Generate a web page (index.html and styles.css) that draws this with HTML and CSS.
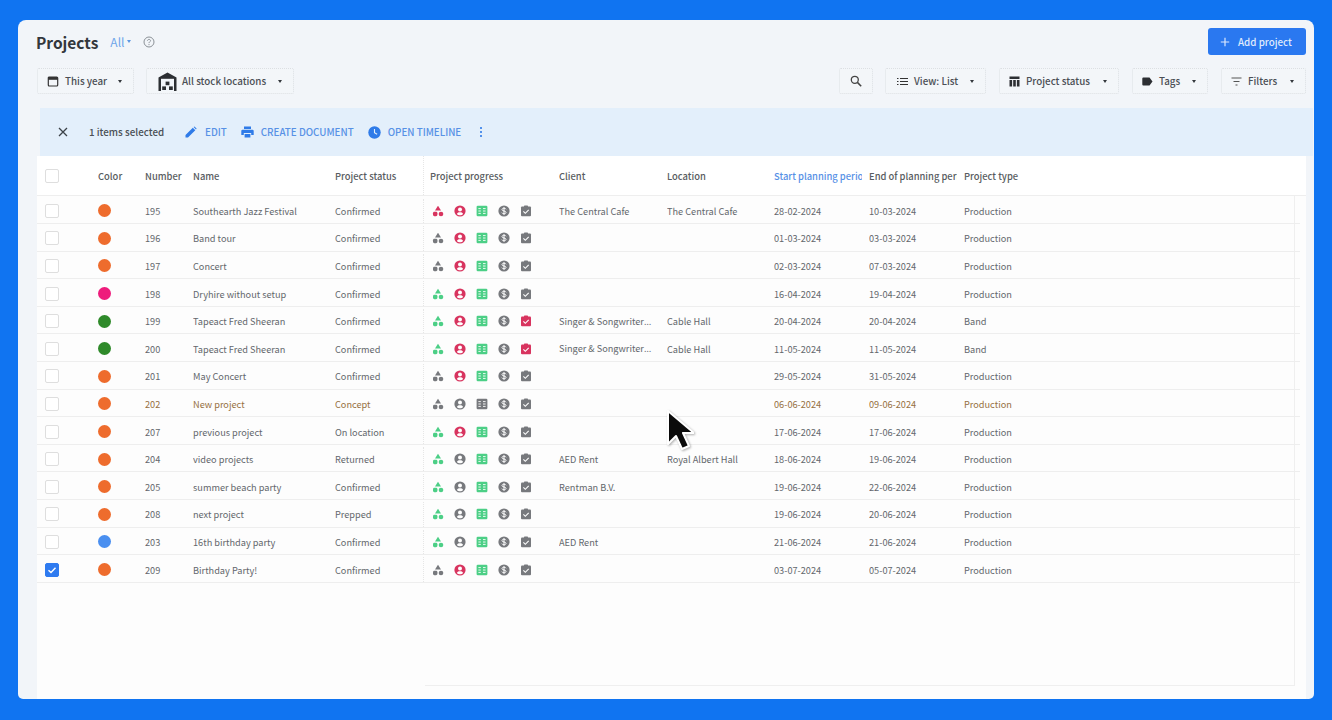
FILE: index.html
```html
<!DOCTYPE html>
<html lang="en">
<head>
<meta charset="utf-8">
<title>Projects</title>
<link rel="stylesheet" href="styles.css">
</head>
<body>
<svg class="defs" width="0" height="0">
  <symbol id="tree" viewBox="0 0 12 12"><path d="M6 .8 9 5.6H3Z"/><rect x="1" y="6.800" width="4.400" height="4.400" rx="1.400"/><circle cx="9" cy="9" r="2.300"/></symbol>
  <symbol id="person" viewBox="0 0 12 12"><circle cx="6" cy="6" r="5.600"/><circle cx="6" cy="4.500" r="2" fill="#fff"/><path d="M2.800 8.900c.6-1.300 1.900-1.700 3.200-1.700s2.600.4 3.200 1.700c-.8.9-2 1.400-3.200 1.400s-2.400-.5-3.200-1.400Z" fill="#fff"/></symbol>
  <symbol id="sheet" viewBox="0 0 12 12"><rect x=".6" y=".8" width="10.800" height="10.400" rx="1.200"/><path d="M2.400 3.600h2.400M7 3.600h2.600M2.400 6h2.400M7 6h2.600M2.400 8.400h2.400M7 8.400h2.600" stroke="#fff" stroke-width=".9" fill="none"/></symbol>
  <symbol id="dollar" viewBox="0 0 12 12"><circle cx="6" cy="6" r="5.600"/><path d="M8 4.300C7.700 3.500 7 3.200 6 3.200c-1.100 0-2 .5-2 1.400C4 6.600 8 5.400 8 7.400c0 .9-.9 1.400-2 1.400-1 0-1.800-.4-2.100-1.200M6 2.200v7.600" stroke="#fff" stroke-width="1" fill="none"/></symbol>
  <symbol id="check" viewBox="0 0 12 12"><rect x="1" y="1.600" width="10" height="9.600" rx="1"/><rect x="4" y=".6" width="4" height="2" rx=".6"/><path d="m3.400 6.400 1.900 1.900 3.400-3.500" stroke="#fff" stroke-width="1.100" fill="none"/></symbol>
</svg>

<main class="card">
  <header class="title-bar">
    <h1 class="title">Projects</h1>
    <span class="all">All</span><span class="caret caret-blue"></span>
    <svg class="help" viewBox="0 0 12 12" width="12" height="12"><circle cx="6" cy="6" r="5" fill="none" stroke="#8a9096" stroke-width="1"/><path d="M4.500 4.800C4.500 3.900 5.200 3.400 6 3.400s1.500.5 1.500 1.300C7.500 5.800 6 5.800 6 7.100" fill="none" stroke="#8a9096" stroke-width="1"/><circle cx="6" cy="8.600" r=".6" fill="#8a9096"/></svg>
    <button class="add-btn"><svg viewBox="0 0 10 10" width="10" height="10"><path d="M5 .8v8.400M.8 5h8.400" stroke="#dbe8fd" stroke-width="1.200"/></svg>Add project</button>
  </header>

  <div class="tool-bar">
    <button class="tool tool-year"><svg viewBox="0 0 12 12" width="12" height="12"><rect x="1.300" y="2" width="9.400" height="9" rx="1" fill="none" stroke="#333" stroke-width="1.200"/><rect x="1.300" y="2" width="9.400" height="2.800" fill="#333"/></svg>This year<span class="caret"></span></button>
    <button class="tool tool-stock"><svg viewBox="0 0 19 19" width="19" height="19"><path d="M.5 5.500 9.500.5l9 5V19h-18Z" fill="#2c2f33"/><rect x="3" y="6.800" width="13" height="12.200" fill="#f2f6fa"/><rect x="7.600" y="9.600" width="3.800" height="3.600" fill="#2c2f33"/><rect x="4.200" y="14.400" width="3.800" height="3.600" fill="#2c2f33"/><rect x="11" y="14.400" width="3.800" height="3.600" fill="#2c2f33"/></svg>All stock locations<span class="caret"></span></button>
    <button class="tool tool-search"><svg viewBox="0 0 12 12" width="12" height="12"><circle cx="4.800" cy="4.800" r="3.500" fill="none" stroke="#444" stroke-width="1.300"/><path d="m7.400 7.400 3.800 3.800" stroke="#444" stroke-width="1.500"/></svg></button>
    <button class="tool tool-view"><svg viewBox="0 0 11 11" width="11" height="11"><path d="M3 2.500h8M3 5.500h8M3 8.500h8M0 2.500h1.500M0 5.500h1.500M0 8.500h1.500" stroke="#333" stroke-width="1.100"/></svg>View: List<span class="caret"></span></button>
    <button class="tool tool-status"><svg viewBox="0 0 11 11" width="11" height="11"><path d="M.5 .5h10v2.400H.5ZM.5 4h2.600v6.500H.5ZM4.200 4h2.600v6.500H4.200ZM7.900 4h2.600v6.500H7.900Z" fill="#2c2f33"/></svg>Project status<span class="caret"></span></button>
    <button class="tool tool-tags"><svg viewBox="0 0 11 9" width="11" height="9"><path d="M1.300 .5h6.200l3 4-3 4H1.300a1 1 0 0 1-1-1v-6a1 1 0 0 1 1-1Z" fill="#2c2f33"/></svg>Tags<span class="caret"></span></button>
    <button class="tool tool-filters"><svg viewBox="0 0 11 9" width="11" height="9"><path d="M.5 1h10M2.500 4.500h6M4.500 8h2" stroke="#555" stroke-width="1.100"/></svg>Filters<span class="caret"></span></button>
  </div>

  <div class="bulk-bar">
    <svg class="bulk-x" viewBox="0 0 10 10" width="10" height="10"><path d="m1 1 8 8M9 1 1 9" stroke="#3c4248" stroke-width="1.300"/></svg>
    <span class="bulk-count">1 items selected</span>
    <span class="bulk-act bulk-edit"><svg viewBox="0 0 12 12" width="12" height="12"><path d="M.5 11.500V9L7.800 1.700l2.500 2.500L3 11.500ZM8.600 1l.8-.6 2.200 2.200-.6.800Z" fill="#2f7be8"/></svg>EDIT</span>
    <span class="bulk-act bulk-doc"><svg viewBox="0 0 13 12" width="13" height="12"><path d="M3 .5h7v2.500H3ZM1.500 3.800h10A1.200 1.200 0 0 1 12.700 5v4H10.200V7H2.800v2H.3V5a1.200 1.200 0 0 1 1.200-1.200ZM3.600 8h5.800v3.500H3.600Z" fill="#2f7be8"/></svg>CREATE DOCUMENT</span>
    <span class="bulk-act bulk-time"><svg viewBox="0 0 13 13" width="13" height="13"><circle cx="6.500" cy="6.500" r="6.200" fill="#2f7be8"/><path d="M6.500 3v3.700l2.600 1.500" stroke="#e3effb" stroke-width="1.100" fill="none"/></svg>OPEN TIMELINE</span>
    <svg class="bulk-more" viewBox="0 0 4 12" width="4" height="12"><circle cx="2" cy="2" r="1.100" fill="#2f7be8"/><circle cx="2" cy="6" r="1.100" fill="#2f7be8"/><circle cx="2" cy="10" r="1.100" fill="#2f7be8"/></svg>
  </div>

  <section class="table">
    <div class="row head">
      <div class="cell c-check"><span class="box"></span></div>
      <div class="cell c-color">Color</div>
      <div class="cell c-num">Number</div>
      <div class="cell c-name">Name</div>
      <div class="cell c-status">Project status</div>
      <div class="cell c-prog">Project progress</div>
      <div class="cell c-client">Client</div>
      <div class="cell c-loc">Location</div>
      <div class="cell c-start sorted">Start planning period</div>
      <div class="cell c-end">End of planning period</div>
      <div class="cell c-type">Project type</div>
    </div>
    <div class="viewport" id="rows"></div>
  </section>

  <svg class="cursor" viewBox="0 0 28 42" width="28" height="42"><path d="M2 2v33l8-8 6 13 7-3-6-13h11Z" fill="#0b0b0b" stroke="#fff" stroke-width="2" stroke-linejoin="round"/></svg>
</main>
<script src="rows.js"></script>
</body>
</html>
```

FILE: rows.js
```js
var O = '#ee6c2d', P = '#ee1c7c', G = '#2f8a2a', B = '#4a8ff0';
var SONG = 'Singer &amp; Songwriter<span class="ell">…</span>';
var rows = [
  ['195', O, 'Southearth Jazz Festival', 'Confirmed', 'rrgyy', 'The Central Cafe', 'The Central Cafe', '28-02-2024', '10-03-2024', 'Production'],
  ['196', O, 'Band tour', 'Confirmed', 'yrgyy', '', '', '01-03-2024', '03-03-2024', 'Production'],
  ['197', O, 'Concert', 'Confirmed', 'yrgyy', '', '', '02-03-2024', '07-03-2024', 'Production'],
  ['198', P, 'Dryhire without setup', 'Confirmed', 'grgyy', '', '', '16-04-2024', '19-04-2024', 'Production'],
  ['199', G, 'Tapeact Fred Sheeran', 'Confirmed', 'grgyr', SONG, 'Cable Hall', '20-04-2024', '20-04-2024', 'Band'],
  ['200', G, 'Tapeact Fred Sheeran', 'Confirmed', 'grgyr', SONG, 'Cable Hall', '11-05-2024', '11-05-2024', 'Band'],
  ['201', O, 'May Concert', 'Confirmed', 'yrgyy', '', '', '29-05-2024', '31-05-2024', 'Production'],
  ['202', O, 'New project', 'Concept', 'yyyyy', '', '', '06-06-2024', '09-06-2024', 'Production', 'concept'],
  ['207', O, 'previous project', 'On location', 'grgyy', '', '', '17-06-2024', '17-06-2024', 'Production'],
  ['204', O, 'video projects', 'Returned', 'gygyy', 'AED Rent', 'Royal Albert Hall', '18-06-2024', '19-06-2024', 'Production'],
  ['205', O, 'summer beach party', 'Confirmed', 'gygyy', 'Rentman B.V.', '', '19-06-2024', '22-06-2024', 'Production'],
  ['208', O, 'next project', 'Prepped', 'gygyy', '', '', '19-06-2024', '20-06-2024', 'Production'],
  ['203', B, '16th birthday party', 'Confirmed', 'gygyy', 'AED Rent', '', '21-06-2024', '21-06-2024', 'Production'],
  ['209', O, 'Birthday Party!', 'Confirmed', 'yrgyy', '', '', '03-07-2024', '05-07-2024', 'Production', 'selected']
];
var icons = ['tree', 'person', 'sheet', 'dollar', 'check'];
var tone = { r: 'i-red', g: 'i-green', y: 'i-grey' };
document.getElementById('rows').innerHTML = rows.map(function (r) {
  var prog = icons.map(function (n, i) {
    return '<svg class="ico ' + tone[r[4][i]] + '"><use href="#' + n + '"/></svg>';
  }).join('');
  var flag = r[10] || '';
  return '<div class="row ' + flag + '">' +
    '<div class="cell c-check"><span class="box">' +
    (flag === 'selected' ? '<svg viewBox="0 0 14 14" width="14" height="14"><path d="m3.500 7.200 2.500 2.400 4.500-4.800" stroke="#fff" stroke-width="1.400" fill="none"/></svg>' : '') +
    '</span></div>' +
    '<div class="cell c-color"><span class="dot" style="background:' + r[1] + '"></span></div>' +
    '<div class="cell c-num">' + r[0] + '</div>' +
    '<div class="cell c-name">' + r[2] + '</div>' +
    '<div class="cell c-status">' + r[3] + '</div>' +
    '<div class="cell c-prog">' + prog + '</div>' +
    '<div class="cell c-client"><span>' + r[5] + '</span></div>' +
    '<div class="cell c-loc">' + r[6] + '</div>' +
    '<div class="cell c-start">' + r[7] + '</div>' +
    '<div class="cell c-end">' + r[8] + '</div>' +
    '<div class="cell c-type">' + r[9] + '</div>' +
    '</div>';
}).join('');
```

FILE: styles.css
```css
* { box-sizing: border-box; }
html, body { margin: 0; height: 100%; }
body {
  background: #1074f1;
  padding: 20px 18px 21px;
  font-family: "Noto Sans CJK SC", "Noto Sans", sans-serif;
  overflow: hidden;
}
.defs { position: absolute; }
.card {
  position: relative;
  height: 679px;
  background: #f2f5f9;
  border-radius: 8px 8px 5px 5px;
  display: flex;
  flex-direction: column;
  overflow: hidden;
}
.title-bar {
  height: 48px;
  display: flex;
  align-items: center;
  padding: 0 8px 5px 18px;
  flex: none;
}
.title { margin: 0; font-size: 15.500px; line-height: 22px; font-weight: 600; color: #33373c; }
.all { margin-left: 12px; font-size: 12px; line-height: 16px; color: #6ea6ea; }
.caret {
  display: inline-block;
  width: 0; height: 0;
  border-left: 2.500px solid transparent;
  border-right: 2.500px solid transparent;
  border-top: 3px solid #33373c;
  flex: none;
}
.caret-blue { margin-left: 3px; border-top-color: #5c97e2; }
.help { margin-left: 12px; }
.add-btn {
  margin-left: auto;
  width: 98px;
  height: 27px;
  display: flex;
  align-items: center;
  gap: 8px;
  padding: 0 0 0 12px;
  background: #2a78f0;
  color: #dfeafc;
  border: 0;
  border-radius: 3px;
  font: 500 9.800px/14px "Noto Sans CJK SC", "Noto Sans", sans-serif;
}
.tool-bar {
  height: 40px;
  display: flex;
  align-items: flex-start;
  padding-right: 8px;
  flex: none;
}
.tool {
  height: 26px;
  display: flex;
  align-items: center;
  background: #f3f6f9;
  border: 1px dotted #dcdfe3;
  border-radius: 2px;
  color: #4b4f55;
  font: 500 9.800px/14px "Noto Sans CJK SC", "Noto Sans", sans-serif;
  padding: 0 0 0 9px;
  gap: 6px;
  position: relative;
}
.tool .caret { position: absolute; right: 11px; top: 11px; }
.tool-year { width: 97px; margin-left: 19px; }
.tool-stock { width: 148px; margin-left: 12px; padding-left: 11px; gap: 5px; }
.tool-search { width: 34px; margin-left: auto; padding-left: 10px; }
.tool-view { width: 101px; margin-left: 12px; padding-left: 11px; }
.tool-status { width: 120px; margin-left: 13px; }
.tool-tags { width: 76px; margin-left: 13px; }
.tool-filters { width: 85px; margin-left: 13px; }

.bulk-bar {
  height: 48px;
  margin: 0 1px 0 22px;
  background: #e3effb;
  display: flex;
  align-items: center;
  flex: none;
  color: #4a5056;
  font-size: 9.800px;
  line-height: 14px;
}
.bulk-x { margin-left: 18px; }
.bulk-count { margin-left: 21px; font-weight: 500; width: 76px; white-space: nowrap; }
.bulk-act { display: flex; align-items: center; gap: 7px; color: #5791e6; font-weight: 500; white-space: nowrap; }
.bulk-edit { margin-left: 20px; gap: 8px; }
.bulk-doc { margin-left: 14px; }
.bulk-time { margin-left: 14px; }
.bulk-more { margin-left: 18px; }

.table {
  flex: 1;
  min-height: 0;
  margin: 0 8px 0 19px;
  background: #fdfdfd;
  display: flex;
  flex-direction: column;
}
.viewport {
  flex: 1;
  margin: 0 11px 13px 0;
  padding-top: .5px;
  border-right: 1px solid #efefef;
  position: relative;
}
.viewport::after {
  content: "";
  position: absolute;
  left: 388px; right: 0; bottom: 0;
  border-bottom: 1px solid #efefef;
}
.row {
  display: grid;
  grid-template-columns: 54px 40px 41px 135px 81px 129px 101px 100px 88px 88px 1fr;
  column-gap: 7px;
  height: 27.600px;
  margin-right: -6px;
  padding-top: 2px;
  border-bottom: 1px solid #eeeeee;
  align-items: stretch;
  color: #63676c;
  font-size: 9.200px;
  line-height: 14px;
}
.row.head {
  height: 40px;
  margin-right: 0;
  padding-top: 0;
  background: #fff;
  color: #585c61;
  font-size: 9.400px;
  font-weight: 500;
  flex: none;
}
.cell {
  display: flex;
  align-items: center;
  white-space: nowrap;
  overflow: hidden;
  min-width: 0;
}
.c-check { padding-left: 8px; }
.c-prog { border-left: 1px dotted #e6e6e6; padding-left: 8px; gap: 10px; }
.head .c-prog { padding-left: 6px; }
.ell { font-family: "Noto Sans", sans-serif; }
.sorted { color: #5791e6; }
.box {
  width: 14px; height: 14px;
  background: #fff;
  border: 1px solid #dedede;
  border-radius: 2px;
  display: block;
  flex: none;
  position: relative;
}
.box svg { position: absolute; left: -1px; top: -1px; }
.selected .box { background: #2f7bf0; border-color: #2f7bf0; }
.dot { width: 13px; height: 13px; border-radius: 50%; display: block; }
.ico { width: 12px; height: 12px; flex: none; }
.i-red { fill: #d8345f; }
.i-green { fill: #4ccf86; }
.i-grey { fill: #77797d; }
.concept .cell { color: #96703f; }

.cursor { position: absolute; left: 648px; top: 389px; filter: drop-shadow(1px 1px 1px rgba(0, 0, 0, .3)); }
```
